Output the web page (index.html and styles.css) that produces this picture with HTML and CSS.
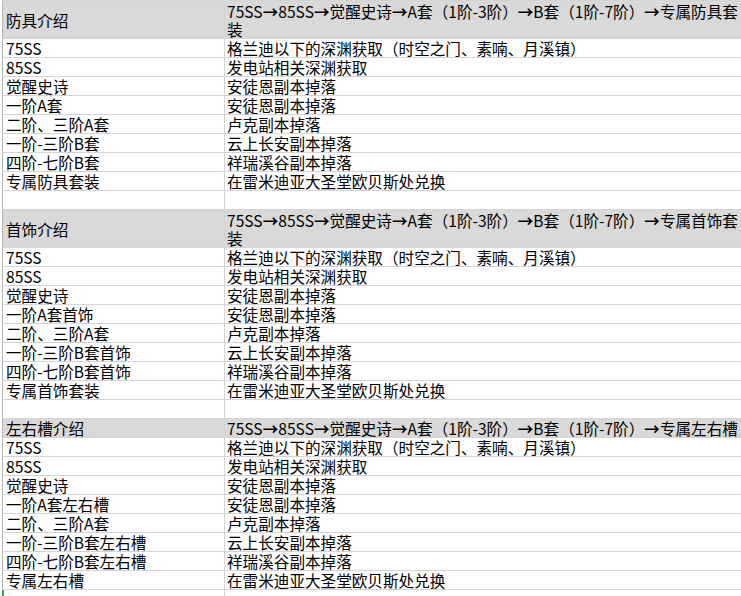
FILE: index.html
```html
<!DOCTYPE html>
<html lang="zh-CN">
<head>
<meta charset="utf-8">
<title>装备获取介绍</title>
<link rel="stylesheet" href="styles.css">
</head>
<body>
<div class="sheet">
  <div class="row head double">
    <div class="c1">防具介绍</div>
    <div class="c2">75SS<span class="arr">→</span>85SS<span class="arr">→</span>觉醒史诗<span class="arr">→</span>A套（1阶-3阶）<span class="arr">→</span>B套（1阶-7阶）<span class="arr">→</span>专属防具套<br>装</div>
  </div>
  <div class="row"><div class="c1">75SS</div><div class="c2">格兰迪以下的深渊获取（时空之门、素喃、月溪镇）</div></div>
  <div class="row"><div class="c1">85SS</div><div class="c2">发电站相关深渊获取</div></div>
  <div class="row"><div class="c1">觉醒史诗</div><div class="c2">安徒恩副本掉落</div></div>
  <div class="row"><div class="c1">一阶A套</div><div class="c2">安徒恩副本掉落</div></div>
  <div class="row"><div class="c1">二阶、三阶A套</div><div class="c2">卢克副本掉落</div></div>
  <div class="row"><div class="c1">一阶-三阶B套</div><div class="c2">云上长安副本掉落</div></div>
  <div class="row"><div class="c1">四阶-七阶B套</div><div class="c2">祥瑞溪谷副本掉落</div></div>
  <div class="row"><div class="c1">专属防具套装</div><div class="c2">在雷米迪亚大圣堂欧贝斯处兑换</div></div>
  <div class="row"><div class="c1"></div><div class="c2"></div></div>

  <div class="row head double">
    <div class="c1">首饰介绍</div>
    <div class="c2">75SS<span class="arr">→</span>85SS<span class="arr">→</span>觉醒史诗<span class="arr">→</span>A套（1阶-3阶）<span class="arr">→</span>B套（1阶-7阶）<span class="arr">→</span>专属首饰套<br>装</div>
  </div>
  <div class="row"><div class="c1">75SS</div><div class="c2">格兰迪以下的深渊获取（时空之门、素喃、月溪镇）</div></div>
  <div class="row"><div class="c1">85SS</div><div class="c2">发电站相关深渊获取</div></div>
  <div class="row"><div class="c1">觉醒史诗</div><div class="c2">安徒恩副本掉落</div></div>
  <div class="row"><div class="c1">一阶A套首饰</div><div class="c2">安徒恩副本掉落</div></div>
  <div class="row"><div class="c1">二阶、三阶A套</div><div class="c2">卢克副本掉落</div></div>
  <div class="row"><div class="c1">一阶-三阶B套首饰</div><div class="c2">云上长安副本掉落</div></div>
  <div class="row"><div class="c1">四阶-七阶B套首饰</div><div class="c2">祥瑞溪谷副本掉落</div></div>
  <div class="row"><div class="c1">专属首饰套装</div><div class="c2">在雷米迪亚大圣堂欧贝斯处兑换</div></div>
  <div class="row"><div class="c1"></div><div class="c2"></div></div>

  <div class="row head">
    <div class="c1">左右槽介绍</div>
    <div class="c2">75SS<span class="arr">→</span>85SS<span class="arr">→</span>觉醒史诗<span class="arr">→</span>A套（1阶-3阶）<span class="arr">→</span>B套（1阶-7阶）<span class="arr">→</span>专属左右槽</div>
  </div>
  <div class="row"><div class="c1">75SS</div><div class="c2">格兰迪以下的深渊获取（时空之门、素喃、月溪镇）</div></div>
  <div class="row"><div class="c1">85SS</div><div class="c2">发电站相关深渊获取</div></div>
  <div class="row"><div class="c1">觉醒史诗</div><div class="c2">安徒恩副本掉落</div></div>
  <div class="row"><div class="c1">一阶A套左右槽</div><div class="c2">安徒恩副本掉落</div></div>
  <div class="row"><div class="c1">二阶、三阶A套</div><div class="c2">卢克副本掉落</div></div>
  <div class="row"><div class="c1">一阶-三阶B套左右槽</div><div class="c2">云上长安副本掉落</div></div>
  <div class="row"><div class="c1">四阶-七阶B套左右槽</div><div class="c2">祥瑞溪谷副本掉落</div></div>
  <div class="row"><div class="c1">专属左右槽</div><div class="c2">在雷米迪亚大圣堂欧贝斯处兑换</div></div>
  <div class="row sel"><div class="c1"></div><div class="c2"></div></div>
</div>
</body>
</html>
```
FILE: styles.css
```css
html, body {
  margin: 0;
  padding: 0;
  background: #ffffff;
  overflow: hidden;
}

body {
  width: 741px;
  height: 596px;
  font-family: "Noto Sans CJK SC", "Noto Sans", sans-serif;
  font-size: 15.6px;
  color: #000000;
}

.sheet {
  margin-left: 2px;
  border-top: 1px solid #d4d4d4;
}

.row {
  display: grid;
  grid-template-columns: 222px 1fr;
  box-sizing: border-box;
  height: 19px;
  border-left: 1px solid #b4b4b4;
  border-bottom: 1px solid #d4d4d4;
  line-height: 18px;
}

.row.head {
  background: #d9d9d9;
}

.row.double {
  height: 38px;
}

.row.sel {
  border-left: 2px solid #2fa55a;
  grid-template-columns: 221px 1fr;
}

.c1 {
  box-sizing: border-box;
  padding-left: 3px;
  border-right: 1px solid #d4d4d4;
  white-space: nowrap;
}

.c2 {
  padding-left: 2px;
  white-space: nowrap;
}

.arr {
  font-weight: 700;
}

.double .c1 {
  display: flex;
  align-items: center;
}

.double .c2 {
  line-height: 18px;
  padding-top: 1px;
}
```
